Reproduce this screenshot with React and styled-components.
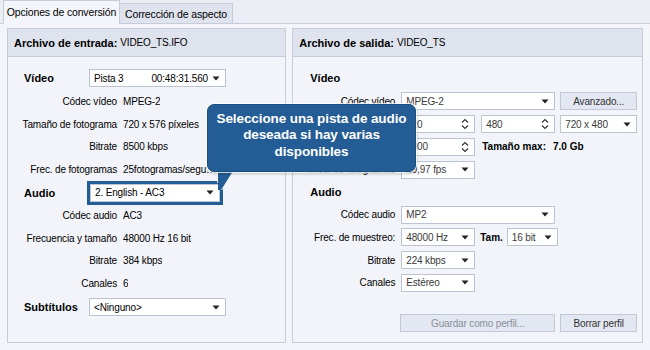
import React from "react";
import styled, { createGlobalStyle } from "styled-components";

const GlobalStyle = createGlobalStyle`
  html, body {
    margin: 0;
    padding: 0;
    background: #eceef6;
  }
  body {
    font-family: Tahoma, "Liberation Sans", "DejaVu Sans", sans-serif;
    font-size: 10px;
    letter-spacing: -0.15px;
    color: #000;
  }
`;

const Page = styled.div`
  position: relative;
  width: 650px;
  height: 350px;
  overflow: hidden;
  background: #eceef6;
`;

const TabBar = styled.div`
  display: flex;
  align-items: flex-end;
  height: 24px;
  padding-left: 3px;
  box-sizing: border-box;
  border-bottom: 1px solid #c6ccd9;
`;

const Tab = styled.div`
  width: ${({ w }) => w}px;
  height: ${({ active }) => (active ? "24px" : "21px")};
  margin-bottom: -1px;
  box-sizing: border-box;
  display: flex;
  align-items: center;
  justify-content: center;
  font-size: 10.5px;
  border: 1px solid #c6ccd9;
  border-bottom: ${({ active }) => (active ? "1px solid #f4f5fa" : "1px solid #c6ccd9")};
  background: ${({ active }) => (active ? "#f4f5fa" : "#dfe3ee")};
  margin-left: ${({ active }) => (active ? "0" : "-1px")};
`;

const Content = styled.div`
  display: flex;
  gap: 6px;
  padding: 4px 7px 7px 7px;
  height: 326px;
  box-sizing: border-box;
  background: #f4f5fa;
`;

const Panel = styled.div`
  width: ${({ w }) => w}px;
  border: 1px solid #c6ccd9;
  background: #f2f4f9;
  display: flex;
  flex-direction: column;
`;

const PanelHeader = styled.div`
  height: 27px;
  display: flex;
  align-items: center;
  padding-left: 6px;
  background: #dee3ed;
  border-bottom: 1px solid #c6ccd9;
  b {
    font-size: 11px;
    letter-spacing: 0;
    font-weight: bold;
    margin-right: 3px;
  }
`;

const PanelBody = styled.div`
  display: flex;
  flex-direction: column;
  padding-top: ${({ top }) => top}px;
`;

const Row = styled.div`
  display: flex;
  align-items: center;
  height: ${({ h }) => h || 22.8}px;
`;

const Heading = styled.div`
  box-sizing: border-box;
  font-size: 11px;
  letter-spacing: 0;
  font-weight: bold;
  width: ${({ w }) => w}px;
  padding-left: ${({ pl }) => pl}px;
  flex-shrink: 0;
`;

const Label = styled.div`
  box-sizing: border-box;
  width: ${({ w }) => w}px;
  text-align: right;
  padding-right: 6px;
  flex-shrink: 0;
  white-space: nowrap;
`;

const BoldNote = styled.div`
  font-size: 10px;
  letter-spacing: 0;
  font-weight: bold;
  white-space: nowrap;
  margin-right: ${({ mr }) => mr || 0}px;
`;

const Value = styled.div`
  white-space: nowrap;
  overflow: hidden;
  text-overflow: ellipsis;
  max-width: ${({ max }) => max || 200}px;
`;

const Field = styled.div`
  width: ${({ w }) => w}px;
  height: 18px;
  box-sizing: border-box;
  border: 1px solid #bcc3d1;
  background: #fff;
  display: flex;
  align-items: center;
  padding: 0 5px 0 4px;
  margin-right: ${({ mr }) => mr || 0}px;
  color: ${({ dim }) => (dim ? "#3a3a3a" : "#000")};
  flex-shrink: 0;
`;

const FieldText = styled.span`
  flex: 1;
  display: flex;
  justify-content: space-between;
  padding-right: 4px;
  white-space: nowrap;
  overflow: hidden;
`;

const Highlight = styled.div`
  border: 3px solid #245d95;
  margin-left: -2px;
  display: flex;
`;

const Button = styled.div`
  width: ${({ w }) => w}px;
  height: 18px;
  box-sizing: border-box;
  border: 1px solid #c1c8d6;
  background: #e3e7f1;
  display: flex;
  align-items: center;
  justify-content: center;
  margin-right: ${({ mr }) => mr || 0}px;
  color: ${({ disabled }) => (disabled ? "#8a8f99" : "#333")};
  flex-shrink: 0;
`;

const Spacer = styled.div`
  height: ${({ h }) => h}px;
`;

const Callout = styled.div`
  position: absolute;
  left: 207px;
  top: 104px;
  width: 209px;
  height: 68px;
  box-sizing: border-box;
  background: #245d95;
  border: 1px solid #1b4c7e;
  border-radius: 7px;
  box-shadow: 0 0 0 1px rgba(255, 255, 255, 0.75), 1px 2px 3px rgba(0, 0, 0, 0.2);
  color: #fff;
  font-family: "Liberation Sans", Arial, sans-serif;
  font-weight: bold;
  font-size: 13.5px;
  letter-spacing: -0.1px;
  line-height: 16.5px;
  text-align: center;
  display: flex;
  align-items: center;
  justify-content: center;
  padding-bottom: 5px;
`;

const Tail = styled.svg`
  position: absolute;
  left: 214px;
  top: 168px;
`;

const Arrow = () => (
  <svg width="8" height="5" viewBox="0 0 8 5">
    <path d="M0.5 0.5 H7.5 L4 4.5 Z" fill="#222" />
  </svg>
);

const SpinArrows = () => (
  <svg width="8" height="12" viewBox="0 0 8 12">
    <path d="M1 4.5 L4 1.5 L7 4.5" fill="none" stroke="#333" strokeWidth="1.2" />
    <path d="M1 7.5 L4 10.5 L7 7.5" fill="none" stroke="#333" strokeWidth="1.2" />
  </svg>
);

const Combo = ({ w, text, mr, dim, children }) => (
  <Field w={w} mr={mr} dim={dim}>
    <FieldText>{children || text}</FieldText>
    <Arrow />
  </Field>
);

const Spin = ({ w, text, mr }) => (
  <Field w={w} mr={mr} dim>
    <FieldText>{text}</FieldText>
    <SpinArrows />
  </Field>
);

const Info = ({ label, value, max }) => (
  <Row>
    <Label w={115}>{label}</Label>
    <Value max={max}>{value}</Value>
  </Row>
);

export default function App() {
  return (
    <Page>
      <GlobalStyle />
      <TabBar>
        <Tab active w={117}>Opciones de conversión</Tab>
        <Tab w={114}>Corrección de aspecto</Tab>
      </TabBar>
      <Content>
        <Panel w={279}>
          <PanelHeader>
            <b>Archivo de entrada:</b> VIDEO_TS.IFO
          </PanelHeader>
          <PanelBody top={9}>
            <Row h={24}>
              <Heading w={81} pl={16}>Vídeo</Heading>
              <Combo w={137}>
                <span>Pista 3</span>
                <span>00:48:31.560</span>
              </Combo>
            </Row>
            <Info label="Códec vídeo" value="MPEG-2" />
            <Info label="Tamaño de fotograma" value="720 x 576 píxeles" />
            <Info label="Bitrate" value="8500 kbps" />
            <Info label="Frec. de fotogramas" value="25fotogramas/segundo" max={95} />
            <Row>
              <Heading w={81} pl={16}>Audio</Heading>
              <Highlight>
                <Combo w={130} text="2. English - AC3" />
              </Highlight>
            </Row>
            <Info label="Códec audio" value="AC3" />
            <Info label="Frecuencia y tamaño" value="48000 Hz 16 bit" />
            <Info label="Bitrate" value="384 kbps" />
            <Info label="Canales" value="6" />
            <Row h={24}>
              <Heading w={81} pl={16}>Subtítulos</Heading>
              <Combo w={137} text="<Ninguno>" />
            </Row>
          </PanelBody>
        </Panel>
        <Panel w={351}>
          <PanelHeader>
            <b>Archivo de salida:</b> VIDEO_TS
          </PanelHeader>
          <PanelBody top={9}>
            <Row h={24}>
              <Heading w={100} pl={17}>Vídeo</Heading>
            </Row>
            <Row>
              <Label w={108}>Códec vídeo</Label>
              <Combo w={154} text="MPEG-2" mr={5} dim />
              <Button w={77}>Avanzado...</Button>
            </Row>
            <Row>
              <Label w={108}>Ancho</Label>
              <Spin w={74} text="720" mr={6} />
              <Spin w={74} text="480" mr={5} />
              <Combo w={77} text="720 x 480" dim />
            </Row>
            <Row>
              <Label w={108}>Bitrate</Label>
              <Spin w={74} text="5000" mr={7} />
              <BoldNote mr={7}>Tamaño max:</BoldNote>
              <BoldNote>7.0 Gb</BoldNote>
            </Row>
            <Row>
              <Label w={108}>Frec. de fotogramas</Label>
              <Combo w={74} text="29,97 fps" dim />
            </Row>
            <Row h={22}>
              <Heading w={100} pl={17}>Audio</Heading>
            </Row>
            <Row>
              <Label w={108}>Códec audio</Label>
              <Combo w={154} text="MP2" dim />
            </Row>
            <Row>
              <Label w={108}>Frec. de muestreo:</Label>
              <Combo w={74} text="48000 Hz" mr={5} dim />
              <BoldNote mr={4}>Tam.</BoldNote>
              <Combo w={51} text="16 bit" dim />
            </Row>
            <Row>
              <Label w={108}>Bitrate</Label>
              <Combo w={74} text="224 kbps" dim />
            </Row>
            <Row>
              <Label w={108}>Canales</Label>
              <Combo w={74} text="Estéreo" dim />
            </Row>
            <Spacer h={18} />
            <Row h={22}>
              <Label w={107} />
              <Button w={155} mr={5} disabled>Guardar como perfil...</Button>
              <Button w={77}>Borrar perfil</Button>
            </Row>
          </PanelBody>
        </Panel>
      </Content>
      <Tail width="26" height="26" viewBox="0 0 26 26">
        <path d="M4 0 L21 0 L7.5 22 L4 22 Z" fill="#245d95" />
        <path d="M21 1 L7.5 22 M3.5 3 L3.5 15" stroke="rgba(255,255,255,0.8)" strokeWidth="1" fill="none" />
      </Tail>
      <Callout>
        Seleccione una pista de audio
        <br />
        deseada si hay varias
        <br />
        disponibles
      </Callout>
    </Page>
  );
}
